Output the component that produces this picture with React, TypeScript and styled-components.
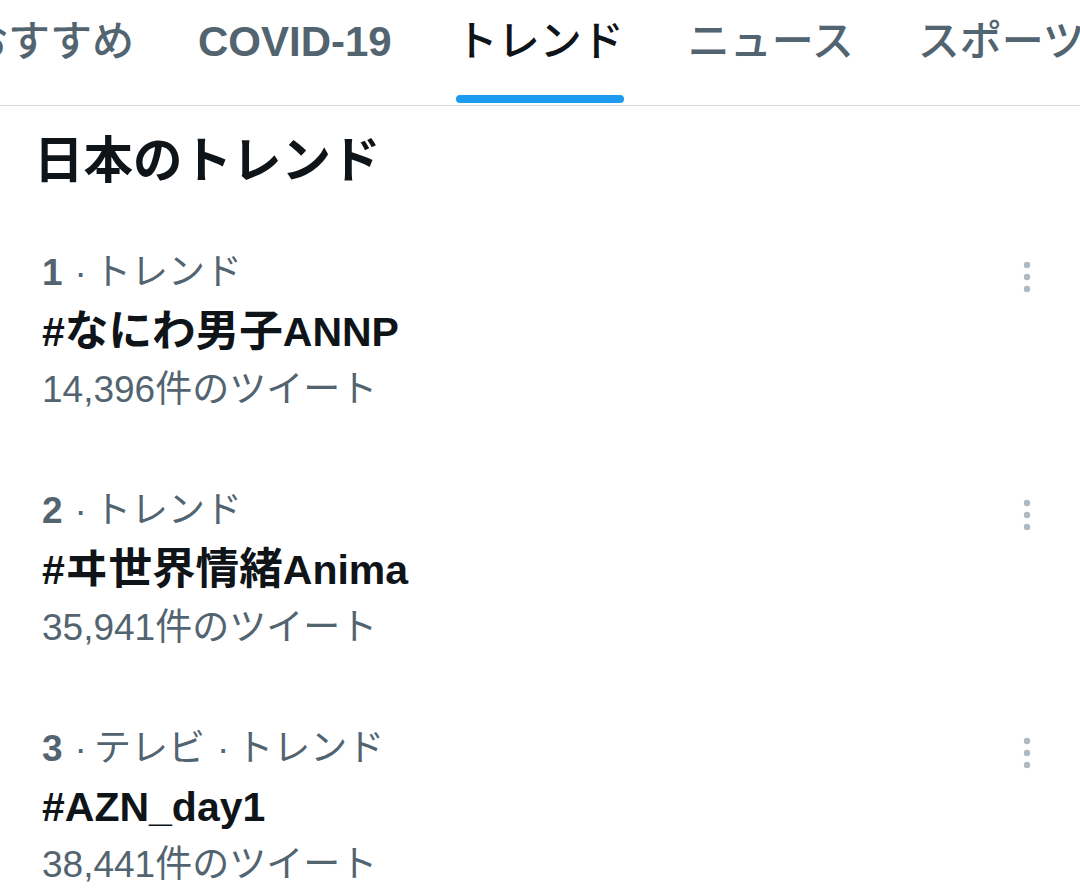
import React from "react";
import styled, { createGlobalStyle } from "styled-components";

const Global = createGlobalStyle`
  html, body { margin: 0; padding: 0; background: #ffffff; }
  body { font-family: "Liberation Sans", "Noto Sans CJK JP", sans-serif; -webkit-font-smoothing: antialiased; }
  #root { width: 1080px; height: 888px; overflow: hidden; }
`;

const Page = styled.div`
  width: 1080px;
  height: 888px;
  overflow: hidden;
  background: #fff;
`;

const TabBar = styled.nav`
  height: 105px;
  border-bottom: 1px solid #d6dadd;
  overflow: hidden;
`;

const TabTrack = styled.div`
  display: flex;
  margin-left: -66px;
  height: 100%;
`;

const Tab = styled.div`
  display: flex;
  flex-direction: column;
  align-items: stretch;
  padding: 0 32px;
  flex: none;
  height: 100%;
`;

const TabLabel = styled.span<{ $active?: boolean; $latin?: boolean }>`
  display: block;
  margin-top: 18px;
  font-size: 42px;
  line-height: 48px;
  white-space: nowrap;
  font-weight: ${(p) => (p.$latin ? 700 : 500)};
  color: ${(p) => (p.$active ? "#0f1419" : "#536471")};
`;

const Indicator = styled.div`
  margin-top: auto;
  margin-bottom: 2px;
  height: 8px;
  border-radius: 4px;
  background: #1d9bf0;
`;

const Heading = styled.h2`
  margin: 0;
  padding: 26px 0 0 34px;
  font-size: 49.5px;
  line-height: 58px;
  font-weight: 700;
  color: #0f1419;
`;

const List = styled.div`
  display: flex;
  flex-direction: column;
  padding-top: 22px;
`;

const Item = styled.div`
  display: flex;
  align-items: flex-start;
  padding: 32px 40px 31px 42px;
`;

const ItemBody = styled.div`
  flex: 1;
  display: flex;
  flex-direction: column;
`;

const Meta = styled.div`
  font-size: 37px;
  line-height: 58px;
  color: #536471;
  white-space: nowrap;
`;

const Rank = styled.span`
  font-weight: 700;
`;

const Sep = styled.span`
  display: inline-block;
  margin: 0 7px 0 12px;
`;

const Title = styled.div`
  font-size: 41px;
  line-height: 58px;
  font-weight: 700;
  color: #0f1419;
  white-space: nowrap;
`;

const WideCjk = styled.span`
  font-size: 43.6px;
`;

const Count = styled.div`
  font-size: 37px;
  line-height: 58px;
  color: #536471;
  white-space: nowrap;
`;

const MoreButton = styled.div`
  width: 26px;
  display: flex;
  justify-content: center;
  margin-top: 17px;
  color: #adbac4;
`;

const tabs = [
  { label: "おすすめ" },
  { label: "COVID-19", latin: true },
  { label: "トレンド", active: true },
  { label: "ニュース" },
  { label: "スポーツ" },
  { label: "エンタメ" },
];

const trends = [
  { rank: 1, category: ["トレンド"], title: "#なにわ男子ANNP", count: "14,396件のツイート" },
  { rank: 2, category: ["トレンド"], title: "#ヰ世界情緒Anima", count: "35,941件のツイート" },
  { rank: 3, category: ["テレビ", "トレンド"], title: "#AZN_day1", count: "38,441件のツイート" },
];

const splitRuns = (text: string) =>
  text.match(/[\u3000-\u9fff\uff00-\uffef]+|[^\u3000-\u9fff\uff00-\uffef]+/g) ?? [];

const isCjk = (s: string) => /[\u3000-\u9fff\uff00-\uffef]/.test(s);

const Dots = () => (
  <svg width="8" height="34" viewBox="0 0 8 34" fill="currentColor">
    <circle cx="4" cy="4" r="3.2" />
    <circle cx="4" cy="16" r="3.2" />
    <circle cx="4" cy="28" r="3.2" />
  </svg>
);

export default function App() {
  return (
    <Page>
      <Global />
      <TabBar>
        <TabTrack>
          {tabs.map((t) => (
            <Tab key={t.label}>
              <TabLabel $active={t.active} $latin={t.latin}>
                {t.label}
              </TabLabel>
              {t.active && <Indicator />}
            </Tab>
          ))}
        </TabTrack>
      </TabBar>
      <Heading>日本のトレンド</Heading>
      <List>
        {trends.map((t) => (
          <Item key={t.rank}>
            <ItemBody>
              <Meta>
                <Rank>{t.rank}</Rank>
                {t.category.map((c) => (
                  <React.Fragment key={c}>
                    <Sep>·</Sep>
                    {c}
                  </React.Fragment>
                ))}
              </Meta>
              <Title>
                {splitRuns(t.title).map((run, i) =>
                  isCjk(run) ? <WideCjk key={i}>{run}</WideCjk> : <React.Fragment key={i}>{run}</React.Fragment>
                )}
              </Title>
              <Count>{t.count}</Count>
            </ItemBody>
            <MoreButton>
              <Dots />
            </MoreButton>
          </Item>
        ))}
      </List>
    </Page>
  );
}
